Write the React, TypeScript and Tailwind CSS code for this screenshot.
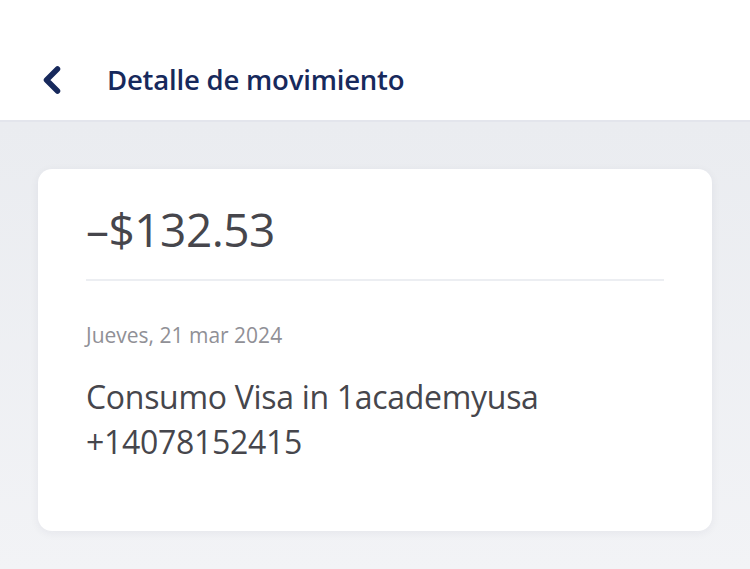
import { ChevronLeft } from "lucide-react";

export default function App() {
  return (
    <div
      className="flex h-[569px] w-[750px] flex-col overflow-hidden bg-[#eff0f4]"
      style={{ fontFamily: '"Open Sans", "Noto Sans", sans-serif' }}
    >
      <header className="flex h-[122px] shrink-0 items-center border-b-2 border-[#e3e5ec] bg-white pt-[40px]">
        <button className="ml-[30px] flex h-11 w-11 items-center justify-center text-[#17295c]">
          <ChevronLeft size={46} strokeWidth={3} />
        </button>
        <h1 className="ml-[33px] text-[27.5px] font-semibold tracking-[-0.2px] text-[#17295c]">
          Detalle de movimiento
        </h1>
      </header>

      <main className="flex-1 bg-gradient-to-b from-[#eaecf0] to-[#f2f3f6] px-[38px] pt-[47px]">
        <section className="h-[362px] rounded-[14px] bg-white px-[48px] pt-[28px] shadow-[0_2px_10px_rgba(30,40,70,0.06)]">
          <p className="text-[46px] leading-[64px] tracking-[-0.5px] text-[#46464c]">
            –$132.53
          </p>
          <div className="mt-[18px] h-[2px] bg-[#eceef2]" />
          <p className="mt-[40px] text-[21px] leading-[28px] text-[#909096]">
            Jueves, 21 mar 2024
          </p>
          <p className="mt-[25px] text-[32px] leading-[45px] tracking-[-0.3px] text-[#46464c]">
            Consumo Visa in 1academyusa
            <br />
            +14078152415
          </p>
        </section>
      </main>
    </div>
  );
}
